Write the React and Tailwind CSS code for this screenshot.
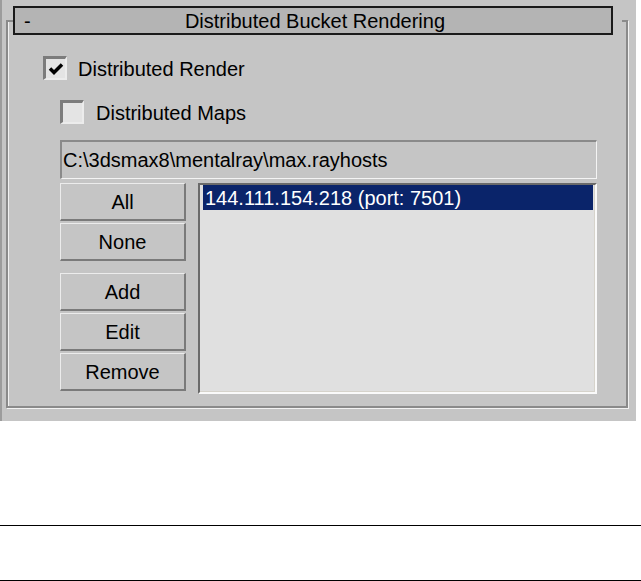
import React, { useState } from 'react';

const font = { fontFamily: '"Liberation Sans", Arial, sans-serif' };

const Checkbox = ({ checked, onChange }) => (
  <button
    type="button"
    onClick={onChange}
    className="w-[24px] h-[24px] shrink-0 flex items-center justify-center bg-[#e4e4e4] border-t-[3px] border-l-[3px] border-b-2 border-r-2 border-t-[#7c7c7c] border-l-[#7c7c7c] border-b-[#ececec] border-r-[#ececec]"
  >
    {checked && (
      <svg width="16" height="14" viewBox="0 0 16 14">
        <path d="M2 6.5 L6 10.5 L14 2.5" fill="none" stroke="#000" strokeWidth="3.5" />
      </svg>
    )}
  </button>
);

const MaxButton = ({ children, className = '' }) => (
  <button
    type="button"
    className={`w-[126px] h-[38px] flex items-center justify-center bg-[#c5c5c5] text-black text-[20px] leading-none border-t border-l border-b-2 border-r-2 border-t-[#ececec] border-l-[#ececec] border-b-[#7a7a7a] border-r-[#7a7a7a] ${className}`}
  >
    {children}
  </button>
);

const App = () => {
  const [render, setRender] = useState(true);
  const [maps, setMaps] = useState(false);
  const hosts = ['144.111.154.218 (port: 7501)'];

  return (
    <div className="w-[641px] h-[581px] bg-white overflow-hidden" style={font}>
      <div className="w-[636px] h-[421px] bg-[#c5c5c5] border-l-2 border-[#9c9c9c] pt-[6px]">
        {/* rollout title bar */}
        <div className="relative z-10 ml-[11px] w-[600px] h-[29px] border-2 border-[#1a1a1a] bg-[#b4b4b4] flex items-center text-[20px] text-black leading-none">
          <span className="w-[30px] pl-[9px]">-</span>
          <span className="flex-1 text-center pr-[26px]">Distributed Bucket Rendering</span>
        </div>

        {/* group box */}
        <div className="-mt-[15px] ml-[4px] w-[622px] h-[388px] border-l-2 border-r-2 border-b-2 border-[#8a8a8a] shadow-[inset_1px_0_0_#f2f2f2,1px_1px_0_#f2f2f2] flex flex-col text-[20px] text-black leading-none">
          <div className="h-[2px] flex justify-between">
            <div className="w-[5px] bg-[#8a8a8a]" />
            <div className="w-[4px] bg-[#8a8a8a]" />
          </div>

          <div className="pl-[35px] pt-[34px] flex flex-col">
            <label className="flex items-center gap-[11px] h-[24px]">
              <Checkbox checked={render} onChange={() => setRender(!render)} />
              <span className="pt-[2px]">Distributed Render</span>
            </label>

            <label className="mt-[20px] ml-[17px] flex items-center gap-[12px] h-[24px]">
              <Checkbox checked={maps} onChange={() => setMaps(!maps)} />
              <span className="pt-[2px]">Distributed Maps</span>
            </label>

            <div className="mt-[16px] ml-[17px] w-[537px] h-[39px] flex items-center pl-[1px] bg-[#c5c5c5] border-t-2 border-l-2 border-b border-r border-t-[#8a8a8a] border-l-[#8a8a8a] border-b-[#f4f4f4] border-r-[#f4f4f4]">
              C:\3dsmax8\mentalray\max.rayhosts
            </div>

            <div className="mt-[4px] ml-[17px] flex gap-[12px]">
              <div className="flex flex-col">
                <MaxButton>All</MaxButton>
                <MaxButton className="mt-[2px]">None</MaxButton>
                <MaxButton className="mt-[12px]">Add</MaxButton>
                <MaxButton className="mt-[2px]">Edit</MaxButton>
                <MaxButton className="mt-[2px]">Remove</MaxButton>
              </div>

              <div className="w-[399px] h-[211px] bg-[#e0e0e0] border-t-2 border-l-2 border-b-2 border-r-2 border-t-[#6a6a6a] border-l-[#6a6a6a] border-b-[#fafafa] border-r-[#fafafa] shadow-[inset_-1px_-1px_0_#d6d3cb] pl-[3px] pr-[2px]">
                {hosts.map((h) => (
                  <div key={h} className="h-[25px] flex items-center pl-[2px] bg-[#0a246a] text-white">
                    {h}
                  </div>
                ))}
              </div>
            </div>
          </div>
        </div>
      </div>

      <div className="mt-[104px] h-px bg-black" />
      <div className="mt-[54px] h-px bg-black" />
    </div>
  );
};

export default App;
